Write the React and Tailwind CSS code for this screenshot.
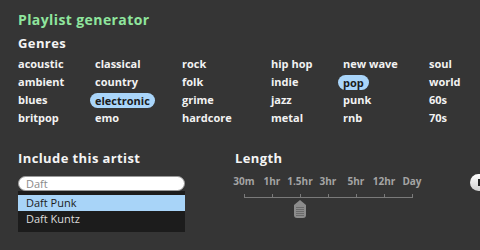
import React from 'react';

const genres = [
  ['acoustic', 'classical', 'rock', 'hip hop', 'new wave', 'soul'],
  ['ambient', 'country', 'folk', 'indie', 'pop', 'world'],
  ['blues', 'electronic', 'grime', 'jazz', 'punk', '60s'],
  ['britpop', 'emo', 'hardcore', 'metal', 'rnb', '70s'],
];

const selected = ['electronic', 'pop'];

const lengths = ['30m', '1hr', '1.5hr', '3hr', '5hr', '12hr', 'Day'];

const Slider = () => (
  <svg width="200" height="30" viewBox="0 0 200 30" className="block">
    <line x1="14" y1="6.5" x2="182" y2="6.5" stroke="#7a7a7a" strokeWidth="1" />
    {[14, 42, 70, 98, 126, 154, 182].map((x) => (
      <line key={x} x1={x + 0.5} y1="3" x2={x + 0.5} y2="7" stroke="#7a7a7a" strokeWidth="1" />
    ))}
    <path d="M64 14 L70 9 L76 14 L76 24 Q76 27 73 27 L67 27 Q64 27 64 24 Z" fill="#8c8c8c" />
    {[16, 18, 20, 22, 24].map((y) => (
      <line key={y} x1="66" y1={y + 0.5} x2="74" y2={y + 0.5} stroke="#6a6a6a" strokeWidth="1" />
    ))}
  </svg>
);

const App = () => {
  return (
    <div
      className="w-[480px] h-[250px] overflow-hidden bg-[#353535] pl-[18px] pt-[11px]"
      style={{ fontFamily: '"Open Sans", "DejaVu Sans", sans-serif' }}
    >
      <h1 className="text-[14px] leading-[18px] font-bold tracking-[0.4px] text-[#8fe59d]">
        Playlist generator
      </h1>
      <h2 className="mt-[5px] text-[13px] leading-[18px] font-bold tracking-[0.4px] text-[#f4f4f4]">
        Genres
      </h2>

      <div className="mt-[3px] grid grid-cols-[77px_87px_89px_72px_86px_1fr] auto-rows-[18px] text-[11px] font-bold">
        {genres.flat().map((g) => (
          <div key={g} className="flex items-center">
            {selected.includes(g) ? (
              <span className="-ml-[5px] px-[5px] h-[15px] leading-[15px] rounded-full bg-[#a9d5fa] text-[#1b1b1b]">
                {g}
              </span>
            ) : (
              <span className="text-[#f2f2f2]">{g}</span>
            )}
          </div>
        ))}
      </div>

      <div className="mt-[22px] flex items-start">
        <div className="w-[167px] shrink-0">
          <h2 className="text-[13px] leading-[18px] font-bold tracking-[0.4px] text-[#f4f4f4]">
            Include this artist
          </h2>
          <div className="mt-[9px] h-[15px] rounded-full bg-white border border-[#9a9a9a] pl-[7px] text-[11px] leading-[13px] text-[#8a8a8a]">
            Daft
          </div>
          <div className="bg-[#1c1c1c] pt-[4px] pb-[5px] text-[11px]">
            <div className="h-[16px] leading-[16px] pl-[8px] bg-[#a8d4f8] text-[#1c1c1c]">Daft Punk</div>
            <div className="h-[16px] leading-[16px] pl-[8px] text-[#dcdcdc]">Daft Kuntz</div>
          </div>
        </div>

        <div className="ml-[50px] w-[200px] shrink-0">
          <h2 className="text-[13px] leading-[18px] font-bold tracking-[0.4px] text-[#f4f4f4]">
            Length
          </h2>
          <div className="-ml-[5px] mt-[8px] flex text-[10px] leading-[12px] font-bold text-[#a4a4a4]">
            {lengths.map((l) => (
              <span key={l} className="w-[28px] text-center">{l}</span>
            ))}
          </div>
          <div className="-ml-[5px] mt-[4px]">
            <Slider />
          </div>
        </div>

        <div className="ml-[35px] mt-[25px] relative w-[30px] h-[17px] shrink-0 rounded-full bg-gradient-to-b from-white to-[#cfcfcf]">
          <div className="absolute left-[8px] top-[5px] w-[6px] h-[7px] bg-[#222]" />
        </div>
      </div>
    </div>
  );
};

export default App;
